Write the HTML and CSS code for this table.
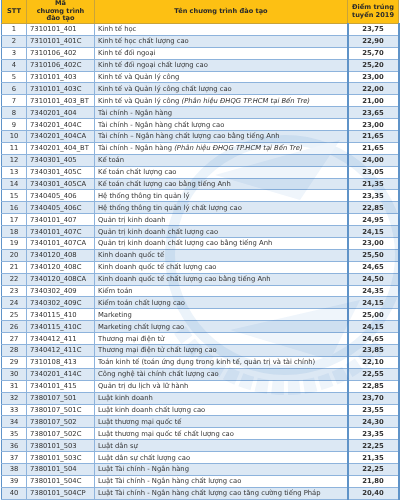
FILE: index.html
```html
<!DOCTYPE html>
<html lang="vi">
<head>
<meta charset="utf-8">
<title>Điểm trúng tuyển 2019</title>
<link rel="stylesheet" href="styles.css">
</head>
<body>
<div class="sheet">
<table class="scores">
<colgroup><col class="c-stt"><col class="c-code"><col class="c-name"><col class="c-score"></colgroup>
<thead>
<tr><th>STT</th><th>Mã<br>chương trình<br>đào tạo</th><th>Tên chương trình đào tạo</th><th>Điểm trúng<br>tuyển 2019</th></tr>
</thead>
<tbody>
<tr><td class="n">1</td><td>7310101_401</td><td>Kinh tế học</td><td class="s">23,75</td></tr>
<tr><td class="n">2</td><td>7310101_401C</td><td>Kinh tế học chất lượng cao</td><td class="s">22,90</td></tr>
<tr><td class="n">3</td><td>7310106_402</td><td>Kinh tế đối ngoại</td><td class="s">25,70</td></tr>
<tr><td class="n">4</td><td>7310106_402C</td><td>Kinh tế đối ngoại chất lượng cao</td><td class="s">25,20</td></tr>
<tr><td class="n">5</td><td>7310101_403</td><td>Kinh tế và Quản lý công</td><td class="s">23,00</td></tr>
<tr><td class="n">6</td><td>7310101_403C</td><td>Kinh tế và Quản lý công chất lượng cao</td><td class="s">22,00</td></tr>
<tr><td class="n">7</td><td>7310101_403_BT</td><td>Kinh tế và Quản lý công <i>(Phân hiệu ĐHQG TP.HCM tại Bến Tre)</i></td><td class="s">21,00</td></tr>
<tr><td class="n">8</td><td>7340201_404</td><td>Tài chính - Ngân hàng</td><td class="s">23,65</td></tr>
<tr><td class="n">9</td><td>7340201_404C</td><td>Tài chính - Ngân hàng chất lượng cao</td><td class="s">23,00</td></tr>
<tr><td class="n">10</td><td>7340201_404CA</td><td>Tài chính – Ngân hàng chất lượng cao bằng tiếng Anh</td><td class="s">21,65</td></tr>
<tr><td class="n">11</td><td>7340201_404_BT</td><td>Tài chính - Ngân hàng <i>(Phân hiệu ĐHQG TP.HCM tại Bến Tre)</i></td><td class="s">21,65</td></tr>
<tr><td class="n">12</td><td>7340301_405</td><td>Kế toán</td><td class="s">24,00</td></tr>
<tr><td class="n">13</td><td>7340301_405C</td><td>Kế toán chất lượng cao</td><td class="s">23,05</td></tr>
<tr><td class="n">14</td><td>7340301_405CA</td><td>Kế toán chất lượng cao bằng tiếng Anh</td><td class="s">21,35</td></tr>
<tr><td class="n">15</td><td>7340405_406</td><td>Hệ thống thông tin quản lý</td><td class="s">23,35</td></tr>
<tr><td class="n">16</td><td>7340405_406C</td><td>Hệ thống thông tin quản lý chất lượng cao</td><td class="s">22,85</td></tr>
<tr><td class="n">17</td><td>7340101_407</td><td>Quản trị kinh doanh</td><td class="s">24,95</td></tr>
<tr><td class="n">18</td><td>7340101_407C</td><td>Quản trị kinh doanh chất lượng cao</td><td class="s">24,15</td></tr>
<tr><td class="n">19</td><td>7340101_407CA</td><td>Quản trị kinh doanh chất lượng cao bằng tiếng Anh</td><td class="s">23,00</td></tr>
<tr><td class="n">20</td><td>7340120_408</td><td>Kinh doanh quốc tế</td><td class="s">25,50</td></tr>
<tr><td class="n">21</td><td>7340120_408C</td><td>Kinh doanh quốc tế chất lượng cao</td><td class="s">24,65</td></tr>
<tr><td class="n">22</td><td>7340120_408CA</td><td>Kinh doanh quốc tế chất lượng cao bằng tiếng Anh</td><td class="s">24,50</td></tr>
<tr><td class="n">23</td><td>7340302_409</td><td>Kiểm toán</td><td class="s">24,35</td></tr>
<tr><td class="n">24</td><td>7340302_409C</td><td>Kiểm toán chất lượng cao</td><td class="s">24,15</td></tr>
<tr><td class="n">25</td><td>7340115_410</td><td>Marketing</td><td class="s">25,00</td></tr>
<tr><td class="n">26</td><td>7340115_410C</td><td>Marketing chất lượng cao</td><td class="s">24,15</td></tr>
<tr><td class="n">27</td><td>7340412_411</td><td>Thương mại điện tử</td><td class="s">24,65</td></tr>
<tr><td class="n">28</td><td>7340412_411C</td><td>Thương mại điện tử chất lượng cao</td><td class="s">23,85</td></tr>
<tr><td class="n">29</td><td>7310108_413</td><td>Toán kinh tế (toán ứng dụng trong kinh tế, quản trị và tài chính)</td><td class="s">22,10</td></tr>
<tr><td class="n">30</td><td>7340201_414C</td><td>Công nghệ tài chính chất lượng cao</td><td class="s">22,55</td></tr>
<tr><td class="n">31</td><td>7340101_415</td><td>Quản trị du lịch và lữ hành</td><td class="s">22,85</td></tr>
<tr><td class="n">32</td><td>7380107_501</td><td>Luật kinh doanh</td><td class="s">23,70</td></tr>
<tr><td class="n">33</td><td>7380107_501C</td><td>Luật kinh doanh chất lượng cao</td><td class="s">23,55</td></tr>
<tr><td class="n">34</td><td>7380107_502</td><td>Luật thương mại quốc tế</td><td class="s">24,30</td></tr>
<tr><td class="n">35</td><td>7380107_502C</td><td>Luật thương mại quốc tế chất lượng cao</td><td class="s">23,35</td></tr>
<tr><td class="n">36</td><td>7380101_503</td><td>Luật dân sự</td><td class="s">22,25</td></tr>
<tr><td class="n">37</td><td>7380101_503C</td><td>Luật dân sự chất lượng cao</td><td class="s">21,35</td></tr>
<tr><td class="n">38</td><td>7380101_504</td><td>Luật Tài chính - Ngân hàng</td><td class="s">22,25</td></tr>
<tr><td class="n">39</td><td>7380101_504C</td><td>Luật Tài chính - Ngân hàng chất lượng cao</td><td class="s">21,80</td></tr>
<tr><td class="n">40</td><td>7380101_504CP</td><td>Luật Tài chính - Ngân hàng chất lượng cao tăng cường tiếng Pháp</td><td class="s">20,40</td></tr>
</tbody>
</table>
<svg class="watermark" width="400" height="500" viewBox="0 0 400 500" aria-hidden="true">
  <circle cx="285" cy="255" r="115" fill="none" stroke="#bcd5ee" stroke-width="10"/>
  <path d="M 215 175 L 340 140 L 300 200 Z" fill="#c9ddf2"/>
  <path d="M 230 330 L 360 300 L 330 360 Z" fill="#c9ddf2"/>
  <path d="M 180 330 A 125 125 0 0 0 380 345" fill="none" stroke="#c9ddf2" stroke-width="14" stroke-dasharray="12 4"/>
</svg>
</div>
</body>
</html>
```
FILE: styles.css
```css
html, body {
  margin: 0;
  padding: 0;
  background: #ffffff;
}
.sheet {
  position: relative;
  width: 400px;
  height: 500px;
  overflow: hidden;
  padding-left: 1px;
  box-sizing: border-box;
}
.watermark {
  position: absolute;
  left: 0;
  top: 0;
  opacity: 0.3;
  mix-blend-mode: multiply;
  pointer-events: none;
}
.scores {
  width: 397px;
  border-collapse: collapse;
  table-layout: fixed;
  font-family: "DejaVu Sans", Verdana, sans-serif;
  font-size: 6.8px;
  color: #333333;
}
.c-stt { width: 25px; }
.c-code { width: 68px; }
.c-name { width: 253px; }
.c-score { width: 51px; }
.scores th {
  background: #fdc013;
  color: #2a2a2a;
  font-weight: bold;
  font-size: 6.6px;
  line-height: 7.6px;
  height: 23px;
  padding: 0;
  border: 1px solid #c9a33a;
  border-top: 0;
  text-align: center;
  vertical-align: middle;
}
.scores td {
  height: 11.9px;
  padding: 0 0 0 3px;
  line-height: 10px;
  border: 1px solid #8db3dc;
  white-space: nowrap;
  overflow: hidden;
  vertical-align: middle;
  box-sizing: border-box;
}
.scores tbody tr:nth-child(even) td {
  background: #dce8f4;
}
.scores td.n {
  text-align: center;
  padding: 0;
}
.scores td.s {
  text-align: center;
  font-weight: bold;
  padding: 0;
}
.scores td:first-child, .scores th:first-child {
  border-left: 1px solid #5f93c8;
}
.scores td:nth-child(2), .scores td:nth-child(3) {
  border-left: 1px solid #5f93c8;
}
.scores td:last-child {
  border-left: 2px solid #5f93c8;
  border-right: 2px solid #5f93c8;
}
```
